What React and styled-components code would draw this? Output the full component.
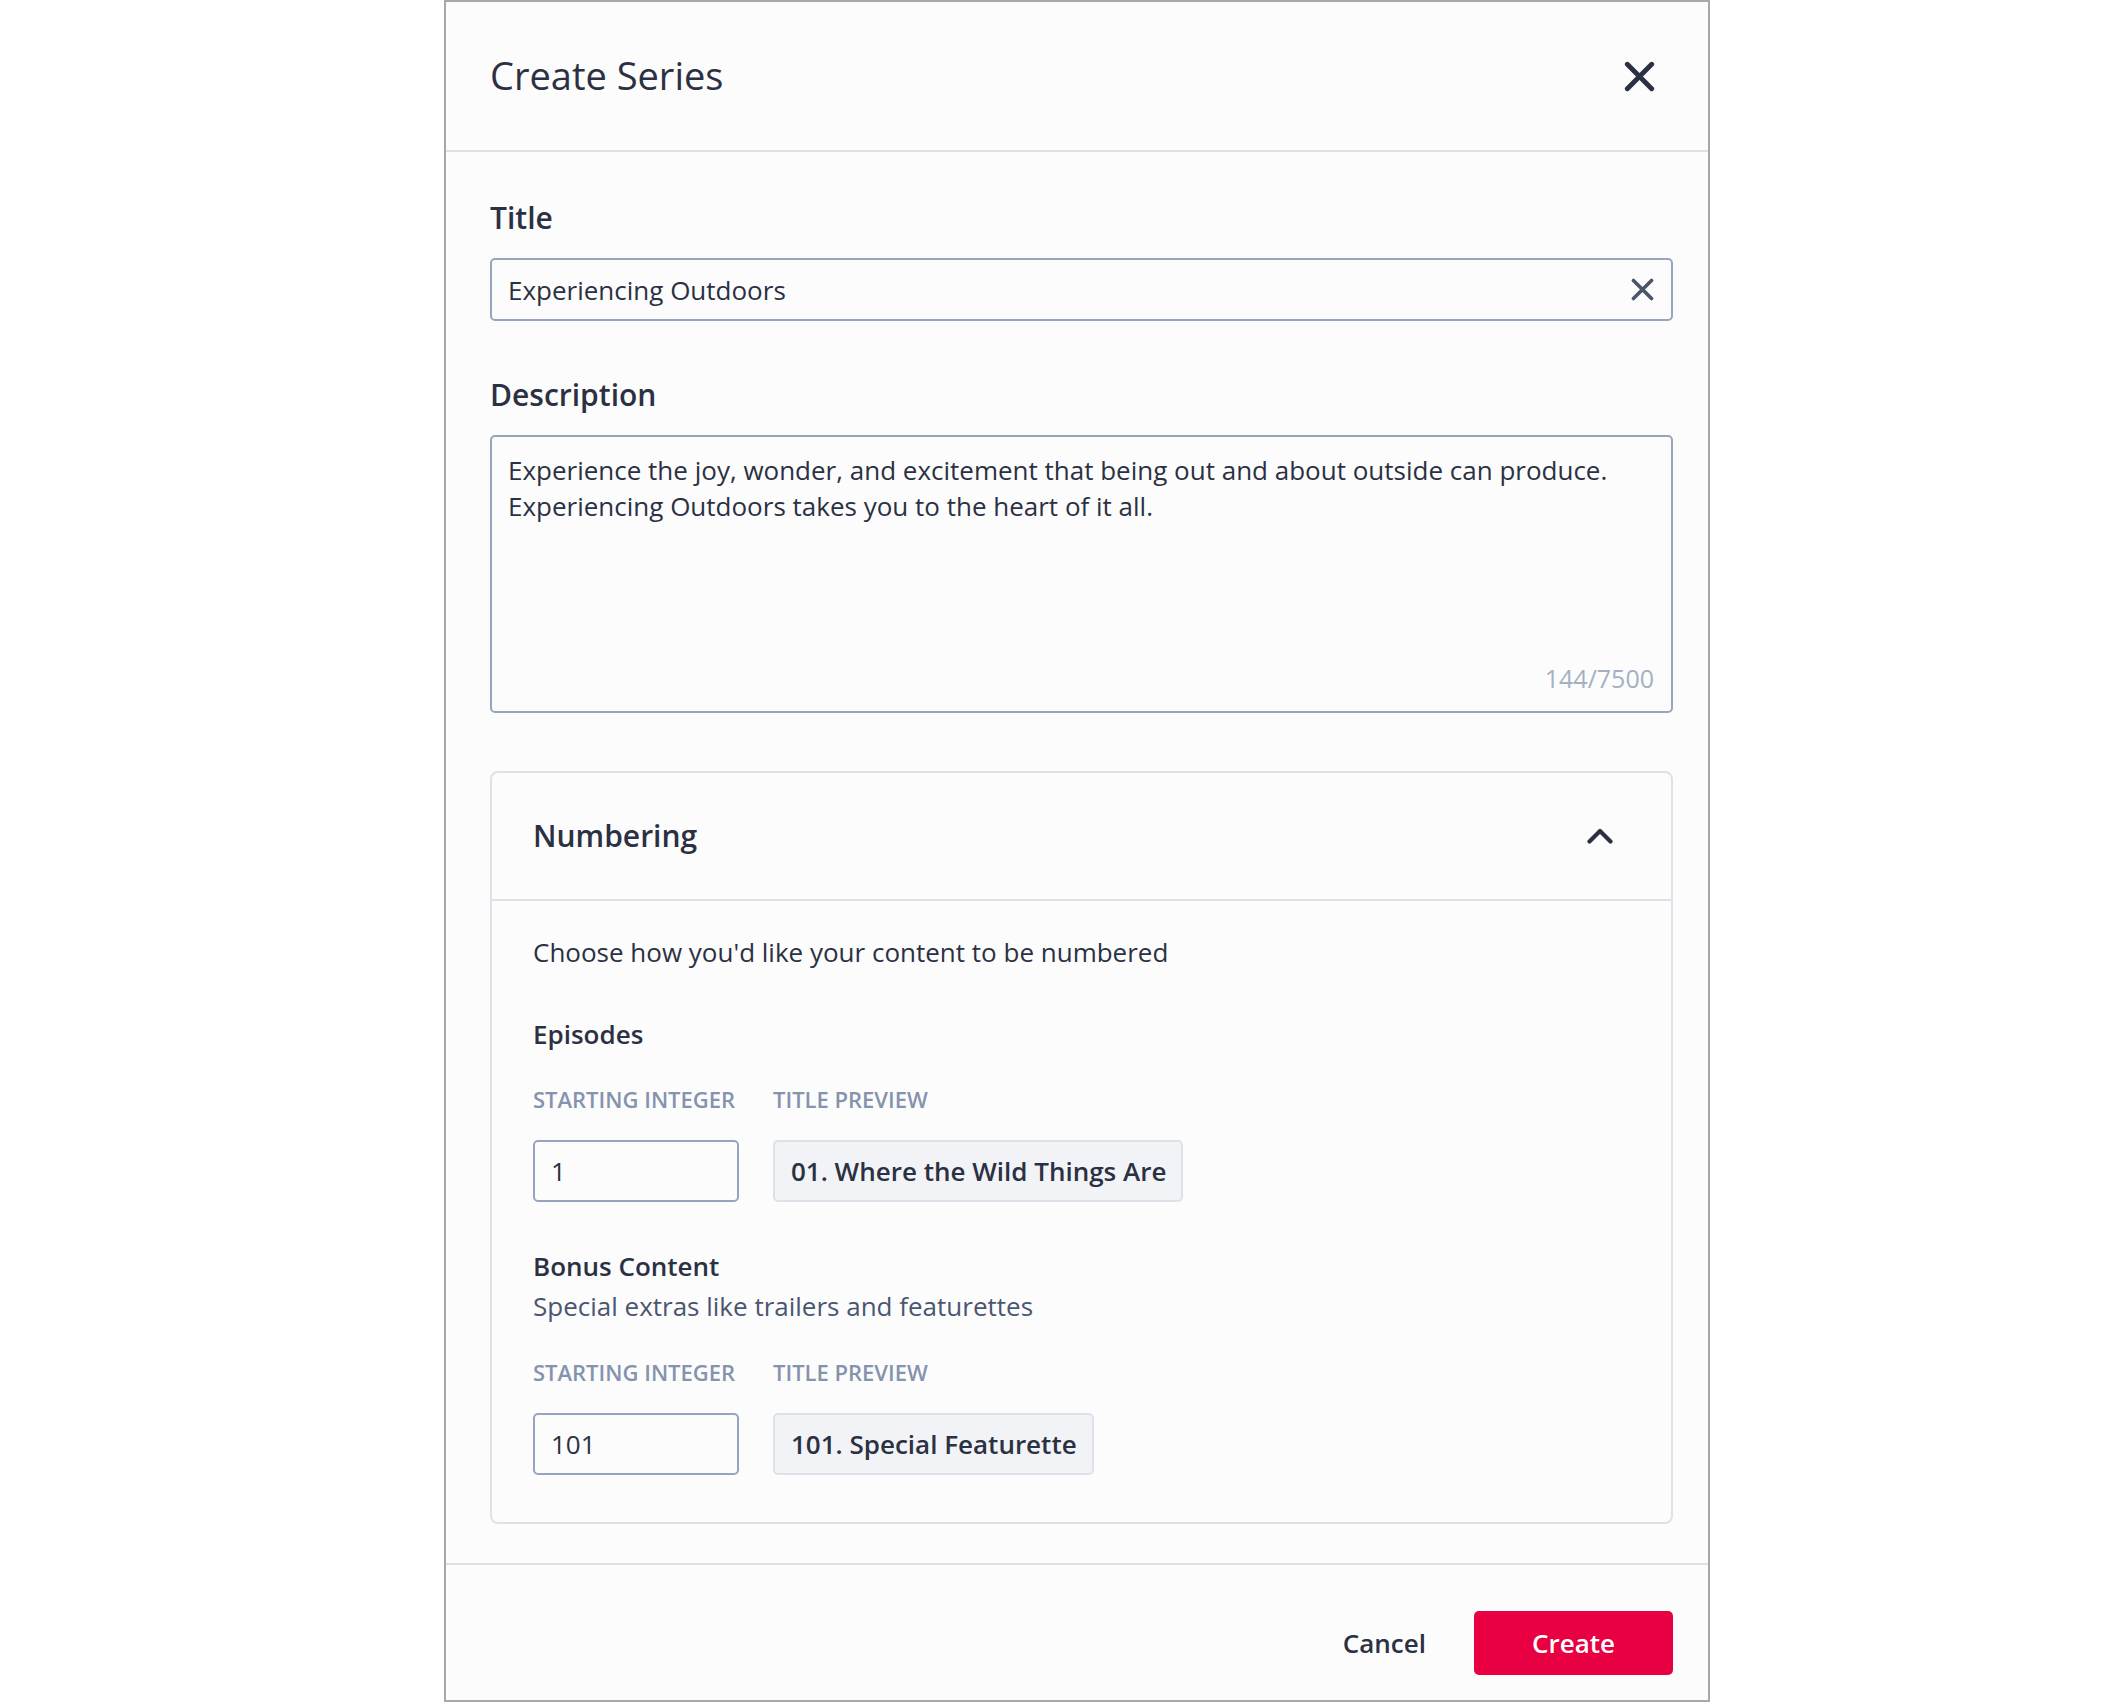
import React, { useState } from "react";
import styled, { createGlobalStyle } from "styled-components";

const GlobalStyle = createGlobalStyle`
  html, body {
    margin: 0;
    padding: 0;
    background: #ffffff;
  }
  body {
    font-family: "Open Sans", "Liberation Sans", sans-serif;
    color: #2b3142;
  }
  * {
    box-sizing: border-box;
  }
`;

const Page = styled.div`
  min-height: 1702px;
  padding-left: 444px;
  background: #ffffff;
`;

const Modal = styled.div`
  width: 1266px;
  height: 1702px;
  border: 2px solid #a8a8a8;
  background: #fcfcfd;
  display: flex;
  flex-direction: column;
`;

const Header = styled.div`
  height: 150px;
  border-bottom: 2px solid #dde2ea;
  display: flex;
  align-items: center;
  justify-content: space-between;
  padding: 0 53px 0 44px;
`;

const Heading = styled.h1`
  margin: 0 0 2px;
  font-size: 38px;
  line-height: 52px;
  font-weight: 400;
  color: #2b3142;
`;

const IconButton = styled.button`
  border: none;
  background: none;
  padding: 0;
  margin: 0;
  display: flex;
  align-items: center;
  justify-content: center;
  cursor: pointer;
  color: ${(p) => p.$color || "#2b3142"};
`;

const Body = styled.div`
  padding: 46px 35px 39px 44px;
  display: flex;
  flex-direction: column;
`;

const FieldGroup = styled.div`
  display: flex;
  flex-direction: column;
  margin-top: ${(p) => p.$top || 0}px;
`;

const FieldLabel = styled.label`
  font-size: 30px;
  line-height: 40px;
  font-weight: 600;
  color: #2b3142;
  margin-bottom: 20px;
`;

const InputBox = styled.div`
  height: 63px;
  border: 2px solid #97a5bc;
  border-radius: 5px;
  background: #fcfcfd;
  display: flex;
  align-items: center;
  padding: 0 17px 0 16px;
`;

const BareInput = styled.input`
  flex: 1;
  border: none;
  outline: none;
  background: transparent;
  font-family: inherit;
  font-size: 26px;
  line-height: 36px;
  color: #2b3142;
  padding: 0;
`;

const AreaBox = styled.div`
  height: 278px;
  border: 2px solid #97a5bc;
  border-radius: 5px;
  background: #fcfcfd;
  display: flex;
  flex-direction: column;
  padding: 15px 17px 15px 16px;
`;

const TextArea = styled.textarea`
  flex: 1;
  border: none;
  outline: none;
  resize: none;
  background: transparent;
  font-family: inherit;
  font-size: 26px;
  line-height: 36px;
  color: #2b3142;
  padding: 0;
  overflow: hidden;
`;

const Counter = styled.div`
  align-self: flex-end;
  font-size: 25px;
  line-height: 36px;
  color: #a5b0c2;
`;

const Card = styled.div`
  margin-top: 58px;
  border: 2px solid #dde2ea;
  border-radius: 8px;
  background: #fcfcfd;
`;

const CardHeader = styled.div`
  height: 128px;
  border-bottom: 2px solid #dde2ea;
  display: flex;
  align-items: center;
  justify-content: space-between;
  padding: 0 58px 0 41px;
  cursor: pointer;
`;

const CardTitle = styled.h2`
  margin: 0;
  font-size: 30px;
  line-height: 40px;
  font-weight: 600;
  color: #2b3142;
`;

const CardBody = styled.div`
  padding: 33px 41px 47px;
  display: flex;
  flex-direction: column;
`;

const Text = styled.p`
  margin: ${(p) => p.$top || 0}px 0 0;
  font-size: 26px;
  line-height: 36px;
  font-weight: ${(p) => (p.$strong ? 600 : 400)};
  color: ${(p) => p.$color || "#2b3142"};
`;

const NumberGrid = styled.div`
  margin-top: ${(p) => p.$top}px;
  display: grid;
  grid-template-columns: 206px auto;
  justify-content: start;
  column-gap: 34px;
  row-gap: 26px;
`;

const ColumnLabel = styled.div`
  font-size: 22px;
  line-height: 30px;
  font-weight: 600;
  color: #8593ad;
  text-transform: uppercase;
`;

const NumberInput = styled.input`
  width: 206px;
  height: 62px;
  border: 2px solid #97a5bc;
  border-radius: 5px;
  background: #fcfcfd;
  outline: none;
  font-family: inherit;
  font-size: 26px;
  color: #2b3142;
  padding: 0 16px;
`;

const Preview = styled.div`
  justify-self: start;
  height: 62px;
  display: flex;
  align-items: center;
  padding: 0 15px 0 16px;
  border: 2px solid #dde2ea;
  border-radius: 5px;
  background: #f1f3f7;
  font-size: 26px;
  font-weight: 600;
  color: #2b3142;
  white-space: nowrap;
`;

const Footer = styled.div`
  border-top: 2px solid #dde2ea;
  padding: 46px 35px 25px 44px;
  display: flex;
  justify-content: flex-end;
  align-items: center;
  gap: 24px;
`;

const Button = styled.button`
  height: 64px;
  border: none;
  border-radius: 5px;
  font-family: inherit;
  font-size: 26px;
  font-weight: 600;
  cursor: pointer;
  padding: ${(p) => (p.$primary ? "0 58px" : "0 24px")};
  background: ${(p) => (p.$primary ? "#e80042" : "transparent")};
  color: ${(p) => (p.$primary ? "#ffffff" : "#2b3142")};
`;

const CloseIcon = ({ size, stroke }) => (
  <svg width={size} height={size} viewBox="0 0 28 28" fill="none">
    <path
      d="M3 3 L25 25 M25 3 L3 25"
      stroke="currentColor"
      strokeWidth={stroke}
      strokeLinecap="round"
    />
  </svg>
);

const Chevron = ({ open }) => (
  <svg
    width="26"
    height="16"
    viewBox="0 0 26 16"
    fill="none"
    style={{ transform: open ? "none" : "rotate(180deg)" }}
  >
    <path
      d="M2.5 13.5 L13 3 L23.5 13.5"
      stroke="#2b3142"
      strokeWidth="4.2"
      strokeLinecap="round"
      strokeLinejoin="round"
    />
  </svg>
);

const description =
  "Experience the joy, wonder, and excitement that being out and about outside can produce. Experiencing Outdoors takes you to the heart of it all.";

const NumberingRow = ({ top, start, preview }) => (
  <NumberGrid $top={top}>
    <ColumnLabel>Starting Integer</ColumnLabel>
    <ColumnLabel>Title Preview</ColumnLabel>
    <NumberInput defaultValue={start} />
    <Preview>{preview}</Preview>
  </NumberGrid>
);

export default function App() {
  const [title, setTitle] = useState("Experiencing Outdoors");
  const [open, setOpen] = useState(true);

  return (
    <Page>
      <GlobalStyle />
      <Modal>
        <Header>
          <Heading>Create Series</Heading>
          <IconButton aria-label="Close">
            <CloseIcon size={31} stroke={4.4} />
          </IconButton>
        </Header>

        <Body>
          <FieldGroup>
            <FieldLabel>Title</FieldLabel>
            <InputBox>
              <BareInput value={title} onChange={(e) => setTitle(e.target.value)} />
              <IconButton $color="#4b5568" aria-label="Clear" onClick={() => setTitle("")}>
                <CloseIcon size={23} stroke={4.4} />
              </IconButton>
            </InputBox>
          </FieldGroup>

          <FieldGroup $top={54}>
            <FieldLabel>Description</FieldLabel>
            <AreaBox>
              <TextArea defaultValue={description} />
              <Counter>144/7500</Counter>
            </AreaBox>
          </FieldGroup>

          <Card>
            <CardHeader onClick={() => setOpen((s) => !s)}>
              <CardTitle>Numbering</CardTitle>
              <Chevron open={open} />
            </CardHeader>
            {open && (
              <CardBody>
                <Text>Choose how you'd like your content to be numbered</Text>
                <Text $top={46} $strong>Episodes</Text>
                <NumberingRow top={32} start="1" preview="01. Where the Wild Things Are" />
                <Text $top={46} $strong>Bonus Content</Text>
                <Text $top={4} $color="#4a5670">
                  Special extras like trailers and featurettes
                </Text>
                <NumberingRow top={33} start="101" preview="101. Special Featurette" />
              </CardBody>
            )}
          </Card>
        </Body>

        <Footer>
          <Button>Cancel</Button>
          <Button $primary>Create</Button>
        </Footer>
      </Modal>
    </Page>
  );
}
